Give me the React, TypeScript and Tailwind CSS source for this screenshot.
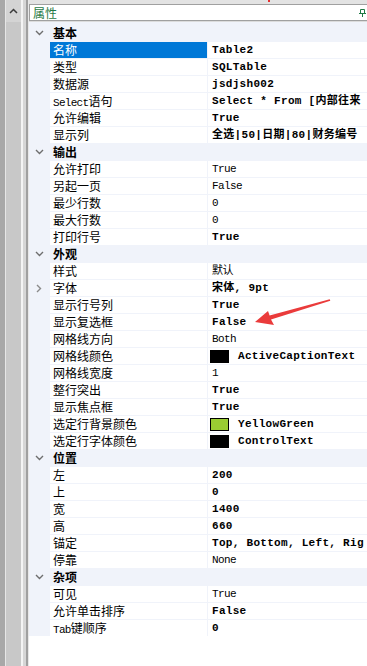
import React from "react";

type Row =
  | { kind: "cat"; name: string }
  | {
      kind: "prop";
      name: React.ReactNode;
      value: string;
      bold?: boolean;
      selected?: boolean;
      swatch?: string;
      expand?: boolean;
    };

const L = (s: string) => (
  <span className="font-['Liberation_Mono',monospace] text-[11px] tracking-[-0.7px]">{s}</span>
);

const rows: Row[] = [
  { kind: "cat", name: "基本" },
  { kind: "prop", name: "名称", value: "Table2", bold: true, selected: true },
  { kind: "prop", name: "类型", value: "SQLTable", bold: true },
  { kind: "prop", name: "数据源", value: "jsdjsh002", bold: true },
  { kind: "prop", name: <>{L("Select")}语句</>, value: "Select * From [内部往来", bold: true },
  { kind: "prop", name: "允许编辑", value: "True", bold: true },
  { kind: "prop", name: "显示列", value: "全选|50|日期|80|财务编号", bold: true },
  { kind: "cat", name: "输出" },
  { kind: "prop", name: "允许打印", value: "True" },
  { kind: "prop", name: "另起一页", value: "False" },
  { kind: "prop", name: "最少行数", value: "0" },
  { kind: "prop", name: "最大行数", value: "0" },
  { kind: "prop", name: "打印行号", value: "True", bold: true },
  { kind: "cat", name: "外观" },
  { kind: "prop", name: "样式", value: "默认" },
  { kind: "prop", name: "字体", value: "宋体, 9pt", bold: true, expand: true },
  { kind: "prop", name: "显示行号列", value: "True", bold: true },
  { kind: "prop", name: "显示复选框", value: "False", bold: true },
  { kind: "prop", name: "网格线方向", value: "Both" },
  { kind: "prop", name: "网格线颜色", value: "ActiveCaptionText", bold: true, swatch: "#000000" },
  { kind: "prop", name: "网格线宽度", value: "1" },
  { kind: "prop", name: "整行突出", value: "True", bold: true },
  { kind: "prop", name: "显示焦点框", value: "True", bold: true },
  { kind: "prop", name: "选定行背景颜色", value: "YellowGreen", bold: true, swatch: "#9acd32" },
  { kind: "prop", name: "选定行字体颜色", value: "ControlText", bold: true, swatch: "#000000" },
  { kind: "cat", name: "位置" },
  { kind: "prop", name: "左", value: "200", bold: true },
  { kind: "prop", name: "上", value: "0", bold: true },
  { kind: "prop", name: "宽", value: "1400", bold: true },
  { kind: "prop", name: "高", value: "660", bold: true },
  { kind: "prop", name: "锚定", value: "Top, Bottom, Left, Rig", bold: true },
  { kind: "prop", name: "停靠", value: "None" },
  { kind: "cat", name: "杂项" },
  { kind: "prop", name: "可见", value: "True" },
  { kind: "prop", name: "允许单击排序", value: "False", bold: true },
  { kind: "prop", name: <>{L("Tab")}键顺序</>, value: "0", bold: true },
];

function ChevDown() {
  return (
    <svg width="9" height="6" viewBox="0 0 9 6">
      <path d="M1 1 L4.5 4.5 L8 1" fill="none" stroke="#6e6e6e" strokeWidth="1.4" />
    </svg>
  );
}

function ChevRight() {
  return (
    <svg width="6" height="9" viewBox="0 0 6 9">
      <path d="M1 1 L4.5 4.5 L1 8" fill="none" stroke="#8a8a8a" strokeWidth="1.4" />
    </svg>
  );
}

function GridRow({ row }: { row: Row }) {
  if (row.kind === "cat") {
    return (
      <div className="flex h-[17px] items-center bg-[#f0f3fa]">
        <div className="flex w-[21px] justify-start pl-[6px]">
          <ChevDown />
        </div>
        <div className="pl-[3px] font-['Noto_Sans_CJK_SC',sans-serif] text-[12px] font-bold leading-[16px] text-black">
          {row.name}
        </div>
      </div>
    );
  }
  return (
    <div className="flex h-[17px] bg-[#f0f3fa] pt-[1px]">
      <div className="flex w-[21px] items-center pl-[7px]">{row.expand && <ChevRight />}</div>
      <div
        className={`h-[16px] w-[157px] whitespace-nowrap pl-[3px] font-['Noto_Sans_CJK_SC',sans-serif] text-[12px] leading-[16px] ${
          row.selected ? "bg-[#0078d7] text-white" : "bg-white text-black"
        }`}
      >
        {row.name}
      </div>
      <div className="ml-[1px] flex h-[16px] flex-1 items-center overflow-hidden whitespace-nowrap bg-white pl-[2px]">
        {row.swatch ? (
          <div
            className="mr-[9px] h-[13px] w-[19px] shrink-0 border border-black"
            style={{ backgroundColor: row.swatch }}
          />
        ) : (
          <div className="w-[2px] shrink-0" />
        )}
        <span
          className={`font-['Liberation_Mono','Noto_Sans_CJK_SC',monospace] text-[11px] leading-[16px] text-black ${
            row.bold ? "font-bold tracking-[0.3px]" : "tracking-[-0.6px]"
          }`}
        >
          {row.value}
        </span>
      </div>
    </div>
  );
}

export default function App() {
  return (
    <div className="relative flex h-[666px] w-[367px] overflow-hidden bg-white">
      {/* left strip */}
      <div className="flex h-full shrink-0">
        <div className="w-[5px] bg-[#a8a8a8]" />
        <div className="w-[1px] bg-[#e6e6e6]" />
        <div className="flex w-[15px] flex-col bg-[#c8c8c8]">
          <div className="flex h-[22px] items-center justify-center bg-[#d4d4d4]">
            <svg width="9" height="6" viewBox="0 0 9 6">
              <path d="M1 5 L4.5 1.5 L8 5" fill="none" stroke="#3c3c3c" strokeWidth="1.5" />
            </svg>
          </div>
        </div>
        <div className="w-[2px] bg-[#f4f4f4]" />
        <div className="w-[3px] bg-[#d6d6d6]" />
        <div className="w-[2px] bg-[#a0a0a0]" />
        <div className="w-[1px] bg-[#e8e8e8]" />
      </div>

      {/* main */}
      <div className="flex min-w-0 flex-1 flex-col">
        <div className="h-[4px] bg-[#e3e3e3]" />
        <div className="flex h-[17px] items-center justify-between border-y border-l border-[#a0a0a0] bg-white pl-[3px] pr-[1px]">
          <span className="font-['Noto_Sans_CJK_SC',sans-serif] text-[12px] leading-[15px] text-[#1f7a45]">
            属性
          </span>
          <svg width="7" height="8" viewBox="0 0 7 8">
            <path d="M1.5 0.5 H5.5 V4.5 H1.5 Z" fill="none" stroke="#1f7a45" strokeWidth="1" />
            <path d="M0 4.5 H7" stroke="#1f7a45" strokeWidth="1" />
            <path d="M3.5 4.5 V8" stroke="#1f7a45" strokeWidth="1" />
          </svg>
        </div>
        <div className="h-[1px] bg-[#dcdcdc]" />
        <div className="flex flex-col bg-[#f0f3fa] pt-[2px]">
          {rows.map((r, i) => (
            <GridRow key={i} row={r} />
          ))}
        </div>
        <div className="flex-1 bg-white" />
      </div>

      {/* red annotation arrow */}
      <svg
        className="pointer-events-none absolute left-0 top-0"
        width="367"
        height="666"
        viewBox="0 0 367 666"
      >
        <polygon
          points="255,322 274,325 271,319.6 330.3,300.8 329.7,299.2 269.6,315.4 268,311"
          fill="#ea3b3b"
        />
      </svg>
      <div className="absolute left-[268px] top-0 h-[2px] w-[2px] bg-[#e53030]" />
    </div>
  );
}
